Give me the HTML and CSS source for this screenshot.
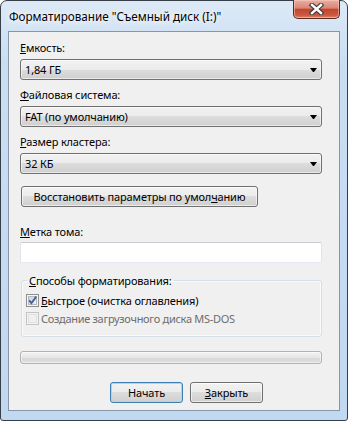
FILE: index.html
```html
<!DOCTYPE html>
<html lang="ru">
<head>
  <meta charset="UTF-8">
  <title>Форматирование</title>
  <link rel="stylesheet" href="styles.css">
</head>
<body>
  <div class="window">
    <div class="titlebar">
      <span class="title">Форматирование "Съемный диск (I:)"</span>
      <div class="close">
        <svg width="15" height="12" viewBox="0 0 15 12">
          <path d="M3 2 L12 10 M12 2 L3 10" stroke="#3a3a3a" stroke-width="4.6" stroke-linecap="square" fill="none"/>
          <path d="M3 2 L12 10 M12 2 L3 10" stroke="#ffffff" stroke-width="2.4" stroke-linecap="square" fill="none"/>
        </svg>
      </div>
    </div>

    <div class="client">
      <div class="label"><u>Е</u>мкость:</div>
      <div class="combo">
        <span>1,84 ГБ</span>
        <svg class="arrow" width="7" height="4" viewBox="0 0 7 4"><path d="M0 0 H7 L4 4 H3 Z" fill="#000"/></svg>
      </div>

      <div class="label"><u>Ф</u>айловая система:</div>
      <div class="combo">
        <span>FAT (по умолчанию)</span>
        <svg class="arrow" width="7" height="4" viewBox="0 0 7 4"><path d="M0 0 H7 L4 4 H3 Z" fill="#000"/></svg>
      </div>

      <div class="label"><u>Р</u>азмер кластера:</div>
      <div class="combo">
        <span>32 КБ</span>
        <svg class="arrow" width="7" height="4" viewBox="0 0 7 4"><path d="M0 0 H7 L4 4 H3 Z" fill="#000"/></svg>
      </div>

      <div class="btn btn-restore"><span>Восстановить параметры по умол<u>ч</u>анию</span></div>

      <div class="label label-volume"><u>М</u>етка тома:</div>
      <div class="textbox"></div>

      <fieldset class="group">
        <legend><u>С</u>пособы форматирования:</legend>
        <div class="group-body">
          <div class="check">
            <svg width="13" height="13" viewBox="0 0 13 13">
              <defs>
                <linearGradient id="cbOn" x1="0" y1="0" x2="1" y2="1">
                  <stop offset="0" stop-color="#cbcfd5"/>
                  <stop offset="1" stop-color="#f6f6f6"/>
                </linearGradient>
              </defs>
              <rect x="0.5" y="0.5" width="12" height="12" fill="#f6f6f6" stroke="#8e8f8f"/>
              <rect x="2.5" y="2.5" width="8" height="8" fill="url(#cbOn)" stroke="#b4b9c0"/>
              <path d="M3.2 6.4 L5.4 9.2 L10.2 2.6" stroke="#4a5f97" stroke-width="1.9" fill="none"/>
            </svg>
            <span><u>Б</u>ыстрое (очистка оглавления)</span>
          </div>
          <div class="check check-off">
            <svg width="13" height="13" viewBox="0 0 13 13">
              <rect x="0.5" y="0.5" width="12" height="12" fill="#f4f4f4" stroke="#c4c4c4"/>
              <rect x="2.5" y="2.5" width="8" height="8" fill="#f0f0f0" stroke="#e0e0e0"/>
            </svg>
            <span>Создание загрузочного диска MS-DOS</span>
          </div>
        </div>
      </fieldset>

      <div class="progress"></div>

      <div class="actions">
        <div class="btn btn-default"><span>Начать</span></div>
        <div class="btn"><span><u>З</u>акрыть</span></div>
      </div>
    </div>
  </div>
</body>
</html>
```

FILE: styles.css
```css
html, body {
  margin: 0;
  background: #ffffff;
}
body {
  font-family: "Noto Sans", sans-serif;
  font-size: 11px;
  letter-spacing: -0.15px;
  color: #000;
}
u {
  text-underline-offset: 1px;
}
.window {
  width: 348px;
  height: 421px;
  box-sizing: border-box;
  border: 1px solid #363e48;
  border-radius: 7px 7px 3px 3px;
  background: linear-gradient(#dde9f6, #cadef3 60px, #c1d8f1);
  padding: 0 7px 9px;
  display: flex;
  flex-direction: column;
}
.titlebar {
  height: 30px;
  display: flex;
  justify-content: space-between;
  align-items: flex-start;
}
.title {
  margin: 7px 0 0 1px;
  font-size: 11.7px;
  letter-spacing: 0;
  line-height: 16px;
  text-shadow: 0 0 5px #fff, 0 0 8px #fff;
}
.close {
  width: 47px;
  height: 19px;
  margin-top: -1px;
  box-sizing: border-box;
  border: 1px solid #5b2a24;
  border-top: none;
  border-radius: 0 0 5px 5px;
  background: linear-gradient(#eab0a3, #d98574 45%, #c34531 52%, #cc5a3f 85%, #dd8a6c);
  box-shadow: inset 0 0 0 1px rgba(255, 210, 200, 0.5);
  display: flex;
  align-items: center;
  justify-content: center;
}
.client {
  flex: 1;
  box-sizing: border-box;
  border: 1px solid #8795a6;
  background: #f0f0f0;
  padding: 8px 17px 0 11px;
  display: flex;
  flex-direction: column;
}
.label {
  height: 15px;
  line-height: 15px;
  margin-bottom: 4px;
}
.combo {
  height: 21px;
  box-sizing: border-box;
  border: 1px solid #707070;
  border-radius: 3px;
  background: linear-gradient(#f2f2f2, #ebebeb 50%, #dddddd 50%, #cfcfcf);
  box-shadow: inset 0 0 0 1px rgba(255, 255, 255, 0.55);
  display: flex;
  align-items: center;
  justify-content: space-between;
  padding: 0 4px 0 4px;
  margin-bottom: 7px;
}
.arrow {
  margin-top: 1px;
}
.btn {
  height: 21px;
  box-sizing: border-box;
  border: 1px solid #707070;
  border-radius: 3px;
  background: linear-gradient(#f2f2f2, #ebebeb 50%, #dddddd 50%, #cfcfcf);
  box-shadow: inset 0 0 0 1px rgba(255, 255, 255, 0.6);
  display: flex;
  align-items: center;
  justify-content: center;
  width: 73px;
  white-space: nowrap;
}
.btn-restore {
  width: 237px;
  margin: 5px 0 17px 1px;
}
.label-volume {
  margin-bottom: 3px;
}
.textbox {
  height: 21px;
  box-sizing: border-box;
  border: 1px solid;
  border-color: #c9cbd0 #e2e3ea #e3e9ef #e2e3ea;
  border-radius: 2px;
  background: #fff;
  margin-bottom: 10px;
}
.group {
  margin: 0 0 0 1px;
  padding: 0;
  border: 1px solid #d5dfe5;
  border-radius: 3px;
  box-shadow: inset 0 0 0 1px #fbfbfb;
}
.group legend {
  margin-left: 5px;
  padding: 0 2px;
  line-height: 15px;
}
.group-body {
  padding: 4px 0 9px 4px;
  display: flex;
  flex-direction: column;
  gap: 1px;
}
.check {
  height: 17px;
  display: flex;
  align-items: center;
  gap: 2px;
}
.check-off {
  color: #6d6d6d;
  letter-spacing: -0.3px;
}
.progress {
  height: 13px;
  box-sizing: border-box;
  border: 1px solid #b2b2b2;
  border-radius: 3px;
  background: linear-gradient(#f4f4f4, #e6e6e6 50%, #d8d8d8 51%, #dedede);
  box-shadow: inset 0 0 0 1px rgba(255, 255, 255, 0.5);
  margin: 14px 0 18px;
}
.actions {
  display: flex;
  gap: 7px;
  padding-left: 90px;
}
.btn-default {
  border-color: #3c7fb1;
  box-shadow: inset 0 0 0 1px #8ee2fb;
}
```
